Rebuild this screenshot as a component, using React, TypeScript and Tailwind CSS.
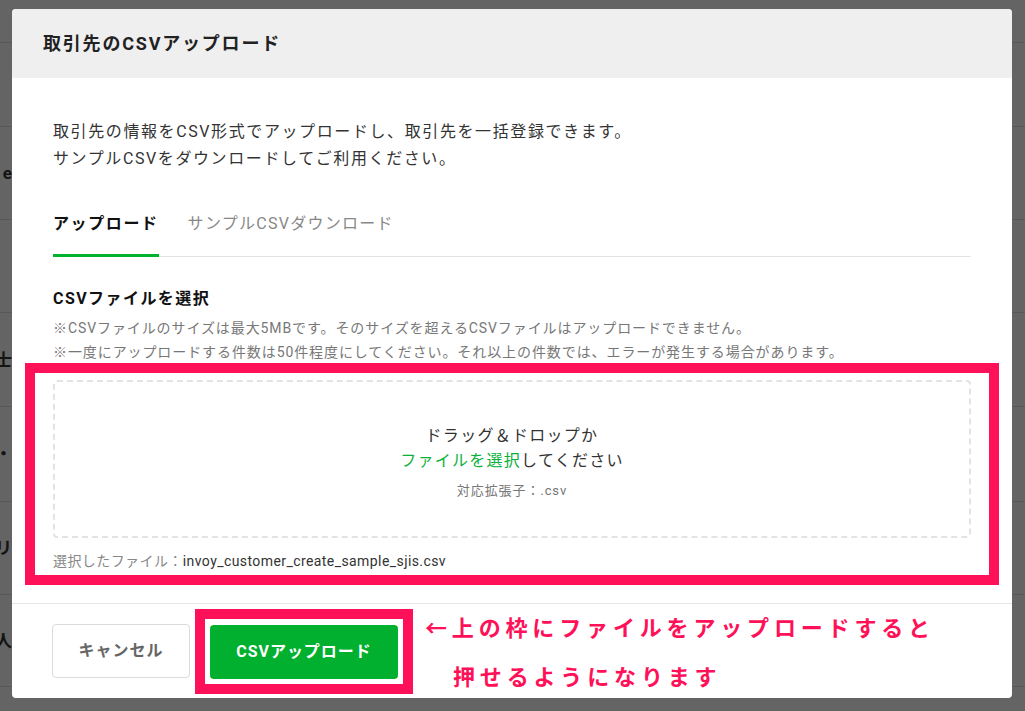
import React from 'react';

// rows of the page that sits behind the dialog overlay
const bgRows: { h: number; text?: string }[] = [
  { h: 43 },
  { h: 84 },
  { h: 93, text: 'e' },
  { h: 93 },
  { h: 94, text: '士' },
  { h: 95, text: '・' },
  { h: 93, text: 'プリ' },
  { h: 92, text: '法人' },
  { h: 93 },
];

function BackgroundPage() {
  return (
    <div className="absolute inset-0 flex flex-col bg-[#646464]">
      {bgRows.map((row, i) => (
        <div
          key={i}
          className="flex shrink-0 border-b border-[#585858]"
          style={{ height: row.h }}
        >
          <div className="flex w-[12px] items-center justify-end overflow-hidden">
            {row.text && (
              <span className="whitespace-nowrap text-[17px] font-bold leading-5 text-[#141414]">
                {row.text}
              </span>
            )}
          </div>
        </div>
      ))}
    </div>
  );
}

export default function App() {
  return (
    <div className="relative h-[711px] w-full overflow-hidden font-[Roboto,'Noto_Sans_CJK_JP',sans-serif]">
      <BackgroundPage />

      {/* Upload dialog */}
      <div className="absolute left-[12px] top-[9px] flex w-[1000px] flex-col overflow-hidden rounded-[4px] bg-white">
        {/* Header */}
        <div className="flex h-[69px] items-center bg-[#efefef] px-[31px]">
          <h2 className="text-[18px] font-bold tracking-[0.1em] text-[#222]">
            取引先のCSVアップロード
          </h2>
        </div>

        {/* Body */}
        <div className="flex flex-col px-[41px] pb-[18px] pt-[40px]">
          <p className="text-[16px] leading-[27px] tracking-[0.1em] text-[#333]">
            取引先の情報をCSV形式でアップロードし、取引先を一括登録できます。
            <br />
            サンプルCSVをダウンロードしてご利用ください。
          </p>

          {/* Tabs */}
          <div className="mt-[40px] flex gap-[29px] border-b border-[#e2e2e2]">
            <div className="-mb-px border-b-[3px] border-[#00b22d] pb-[18px] text-[16px] font-bold leading-6 tracking-[0.1em] text-[#111]">
              アップロード
            </div>
            <div className="pb-[18px] text-[16px] leading-6 tracking-[0.08em] text-[#888]">
              サンプルCSVダウンロード
            </div>
          </div>

          <h3 className="mt-[30px] text-[16px] font-bold leading-6 tracking-[0.09em] text-[#111]">
            CSVファイルを選択
          </h3>
          <div className="mt-[5px] text-[14px] leading-6 tracking-[0.065em] text-[#777]">
            <p>※CSVファイルのサイズは最大5MBです。そのサイズを超えるCSVファイルはアップロードできません。</p>
            <p>※一度にアップロードする件数は50件程度にしてください。それ以上の件数では、エラーが発生する場合があります。</p>
          </div>

          {/* Highlighted drop area */}
          <div className="-mx-[28px] -mt-px border-[10px] border-[#fe1158] px-[18px] pb-[4px] pt-[7px]">
            <div className="flex h-[158px] flex-col items-center rounded-[4px] border-2 border-dashed border-[#e3e3e3] pt-[41px]">
              <p className="text-[16px] leading-[25px] tracking-[0.08em] text-[#333]">
                ドラッグ＆ドロップか
              </p>
              <p className="text-[16px] leading-[25px] tracking-[0.08em] text-[#333]">
                <span className="text-[#0bb13b]">ファイルを選択</span>してください
              </p>
              <p className="mt-[8px] text-[13px] leading-5 tracking-[0.07em] text-[#777]">
                対応拡張子：.csv
              </p>
            </div>
            <p className="mt-[13px] text-[14px] leading-5 tracking-[0.03em] text-[#888]">
              選択したファイル：<span className="text-[#333]">invoy_customer_create_sample_sjis.csv</span>
            </p>
          </div>
        </div>

        {/* Footer */}
        <div className="flex h-[95px] items-center border-t border-[#e6e6e6] px-[40px]">
          <button className="flex h-[54px] w-[138px] items-center justify-center rounded-[4px] border border-[#dcdcdc] bg-white text-[16px] font-bold tracking-[0.06em] text-[#666]">
            キャンセル
          </button>
          <div className="ml-[5px] border-[10px] border-[#fe1158] px-[5px] pb-[5px] pt-[6px]">
            <button className="flex h-[54px] w-[188px] items-center justify-center rounded-[4px] bg-[#00b02e] text-[16px] font-bold tracking-[0.06em] text-white">
              CSVアップロード
            </button>
          </div>
          <div className="ml-[12px] text-[22px] font-bold leading-[49px] tracking-[0.22em] text-[#fe1158] font-['Noto_Sans_CJK_JP',sans-serif]">
            <p>←上の枠にファイルをアップロードすると</p>
            <p className="pl-[28px]">押せるようになります</p>
          </div>
        </div>
      </div>
    </div>
  );
}
